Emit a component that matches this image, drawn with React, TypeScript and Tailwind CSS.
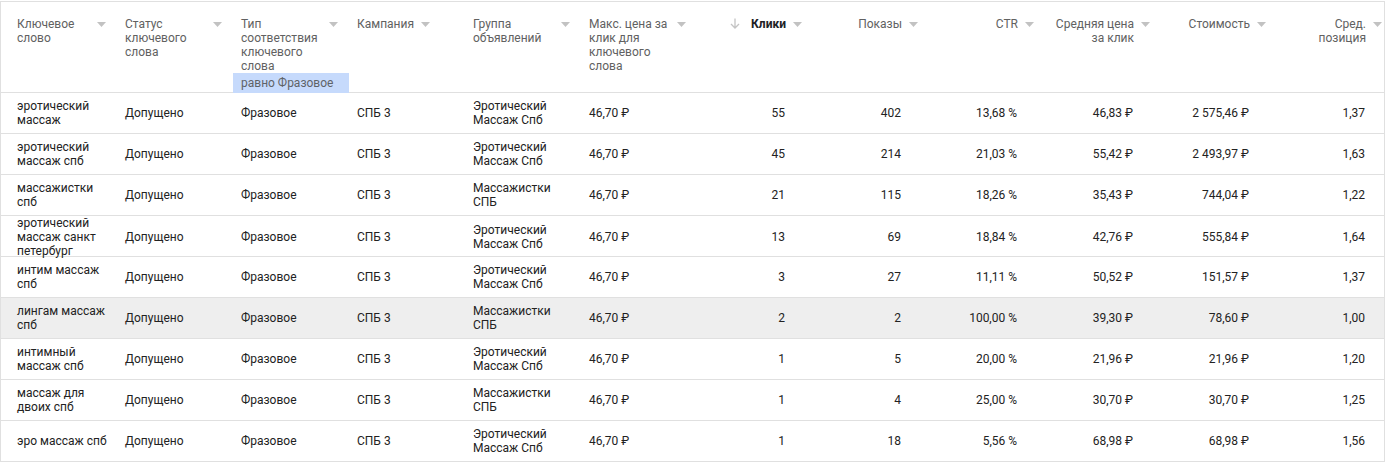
import React from "react";

type Col = { title: string; align: "left" | "right"; sorted?: boolean; filter?: string };

const cols: Col[] = [
  { title: "Ключевое слово", align: "left" },
  { title: "Статус ключевого слова", align: "left" },
  { title: "Тип соответствия ключевого слова", align: "left", filter: "равно Фразовое" },
  { title: "Кампания", align: "left" },
  { title: "Группа объявлений", align: "left" },
  { title: "Макс. цена за клик для ключевого слова", align: "left" },
  { title: "Клики", align: "right", sorted: true },
  { title: "Показы", align: "right" },
  { title: "CTR", align: "right" },
  { title: "Средняя цена\nза клик", align: "right" },
  { title: "Стоимость", align: "right" },
  { title: "Сред.\nпозиция", align: "right" },
];

const EM = "Эротический\nМассаж Спб";
const MS = "Массажистки\nСПБ";

const rows: string[][] = [
  ["эротический\nмассаж", EM, "55", "402", "13,68 %", "46,83 ₽", "2 575,46 ₽", "1,37"],
  ["эротический\nмассаж спб", EM, "45", "214", "21,03 %", "55,42 ₽", "2 493,97 ₽", "1,63"],
  ["массажистки\nспб", MS, "21", "115", "18,26 %", "35,43 ₽", "744,04 ₽", "1,22"],
  ["эротический\nмассаж санкт\nпетербург", EM, "13", "69", "18,84 %", "42,76 ₽", "555,84 ₽", "1,64"],
  ["интим массаж\nспб", EM, "3", "27", "11,11 %", "50,52 ₽", "151,57 ₽", "1,37"],
  ["лингам массаж\nспб", MS, "2", "2", "100,00 %", "39,30 ₽", "78,60 ₽", "1,00"],
  ["интимный\nмассаж спб", EM, "1", "5", "20,00 %", "21,96 ₽", "21,96 ₽", "1,20"],
  ["массаж для\nдвоих спб", MS, "1", "4", "25,00 %", "30,70 ₽", "30,70 ₽", "1,25"],
  ["эро массаж спб", EM, "1", "18", "5,56 %", "68,98 ₽", "68,98 ₽", "1,56"],
];

function Tri() {
  return (
    <svg width="9" height="5" viewBox="0 0 9 5" className="shrink-0 mt-[5px]">
      <path d="M0 0 L9 0 L4.5 5 Z" fill="#c2c2c2" />
    </svg>
  );
}

function SortArrow() {
  return (
    <svg width="10" height="11" viewBox="0 0 10 11" className="shrink-0 mt-[1px] mr-[4px]">
      <path d="M5 0.5 V10 M1 6 L5 10 L9 6" stroke="#c4c4c4" strokeWidth="1.3" fill="none" />
    </svg>
  );
}

function HeaderCell({ col, idx }: { col: Col; idx: number }) {
  const first = idx === 0;
  if (col.align === "left") {
    return (
      <div className="flex flex-col h-full">
        <div className={`flex items-start gap-[7px] pt-[15px] pr-[11px] flex-1 ${first ? "pl-[16px]" : "pl-[8px]"}`}>
          <div className="leading-[14px]">{col.title}</div>
          <Tri />
        </div>
        {col.filter && (
          <div className="h-[20px] bg-[#c6dafc] pl-[8px] flex items-center leading-[14px] text-[#5f6368]">
            {col.filter}
          </div>
        )}
      </div>
    );
  }
  return (
    <div className="flex items-start justify-end gap-[7px] pt-[15px] pr-[11px] pl-[2px] h-full">
      {col.sorted && <SortArrow />}
      <div
        className={`leading-[14px] text-right whitespace-pre-line ${col.sorted ? "font-bold text-[#202124]" : ""}`}
      >
        {col.title}
      </div>
      <Tri />
    </div>
  );
}

export default function App() {
  return (
    <div
      className="bg-white w-[1387px] h-[463px] pt-px"
      style={{ fontFamily: "Roboto, 'Noto Sans', sans-serif" }}
    >
      <div className="w-[1385px] overflow-hidden border-l border-t border-r border-[#e0e0e0] text-[12px]">
        <div className="w-[1392px]">
          <div className="grid grid-cols-[116px_repeat(11,116px)] h-[91px] border-b border-[#e0e0e0] text-[#616161]">
            {cols.map((c, i) => (
              <HeaderCell key={i} col={c} idx={i} />
            ))}
          </div>
          {rows.map((r, ri) => {
            const cells = [r[0], "Допущено", "Фразовое", "СПБ 3", r[1], "46,70 ₽", r[2], r[3], r[4], r[5], r[6], r[7]];
            return (
              <div
                key={ri}
                className={`grid grid-cols-[116px_repeat(11,116px)] h-[41px] border-b border-[#e0e0e0] text-[#222222] leading-[14px] ${
                  ri === 5 ? "bg-[#eeeeee]" : ""
                }`}
              >
                {cells.map((t, ci) => {
                  const right = ci >= 6;
                  let cls = "flex items-center whitespace-pre-line ";
                  if (right) cls += "justify-end text-right pr-[28px] pl-[4px]";
                  else if (ci === 0) cls += "pl-[16px] pr-[2px]";
                  else cls += "pl-[8px] pr-[4px]";
                  return (
                    <div key={ci} className={cls}>
                      <span>{t}</span>
                    </div>
                  );
                })}
              </div>
            );
          })}
        </div>
      </div>
    </div>
  );
}
